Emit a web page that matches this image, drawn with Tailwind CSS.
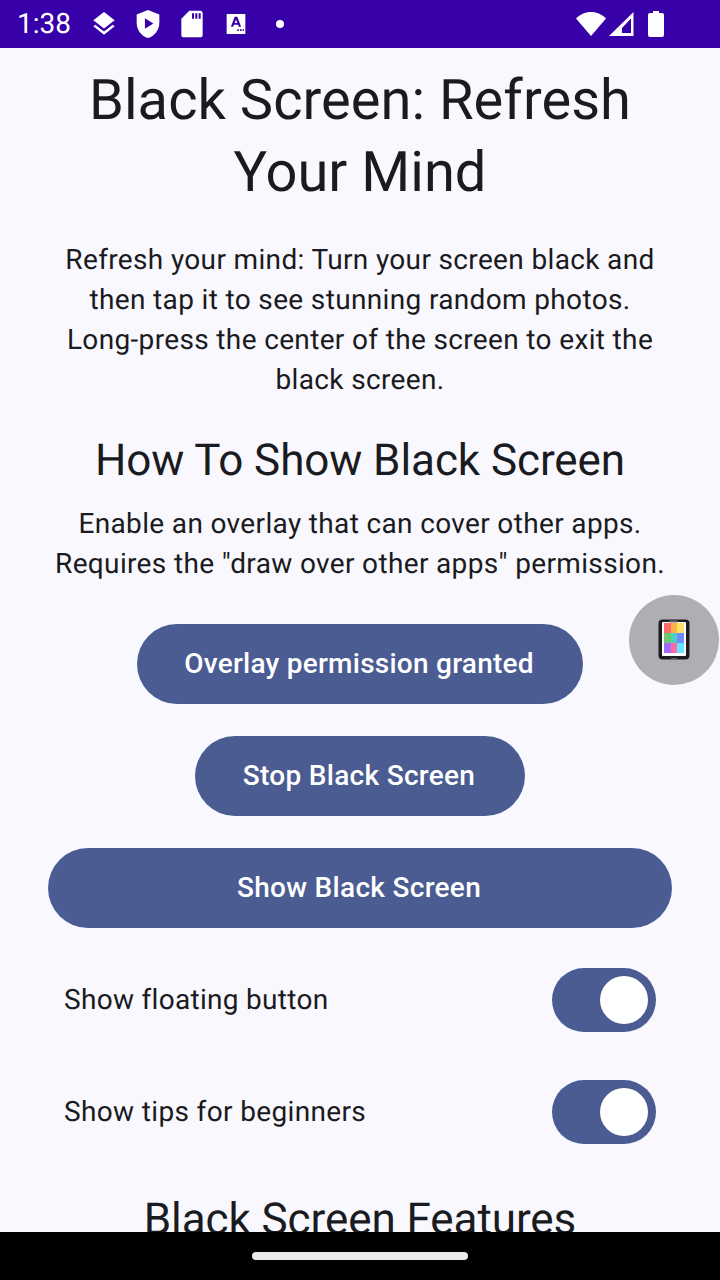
<!DOCTYPE html>
<html lang="en">
<head>
  <meta charset="UTF-8" />
  <meta name="viewport" content="width=device-width, initial-scale=1.0" />
  <title>Black Screen</title>
  <script src="https://cdn.jsdelivr.net/npm/@tailwindcss/browser@4"></script>
</head>
<body class="relative w-[720px] h-[1280px] overflow-hidden flex flex-col bg-[#f9f8ff] text-[#1a1b20] font-['Roboto',sans-serif] [text-rendering:geometricPrecision]">

  <!-- Status bar -->
  <div class="h-12 shrink-0 bg-[#3700a9] text-white flex items-center justify-between pl-[17px] pr-[55px]">
    <div class="flex items-center">
      <span class="text-[28px] leading-none w-[71px]">1:38</span>
      <div class="flex items-center gap-[12px]">
        <svg class="w-[32px] h-[32px]" viewBox="0 0 24 24" fill="#fff"><path d="M12 3 4 9.200l8 6.200 8-6.200z"/><path d="m12 17.600-6.600-5.100L4 13.700l8 6.300 8-6.300-1.400-1.200z"/></svg>
        <svg class="w-[32px] h-[32px]" viewBox="0 0 24 24" fill="#fff"><path fill-rule="evenodd" d="M12 1.500 3.500 4.800v6.400c0 5.200 3.600 9.900 8.500 11.300 4.900-1.400 8.500-6.100 8.500-11.300V4.800zM9.700 7.600v8l6.300-4z"/></svg>
        <svg class="w-[32px] h-[32px]" viewBox="0 0 24 24" fill="#fff"><path fill-rule="evenodd" d="M10 2h8a2 2 0 0 1 2 2v16a2 2 0 0 1-2 2H6a2 2 0 0 1-2-2V8zM12 4v4h1.500V4zm2.500 0v4H16V4zM17 4v4h1.500V4z"/></svg>
        <svg class="w-[32px] h-[32px]" viewBox="0 0 24 24" fill="#fff"><path fill-rule="evenodd" d="M5 4.500h14v15H5zM11 6.500 8.200 14h1.700l.5-1.500h3.200l.5 1.500h1.700L13 6.500zM12 8.700l1 2.500h-2zM13 16h1.200v1.300H13zM15 16h1.200v1.300H15zM17 16h1v1.300h-1z"/></svg>
        <span class="w-[8px] h-[8px] rounded-full bg-white ml-[12px]"></span>
      </div>
    </div>
    <div class="flex items-center">
      <svg class="w-[32px] h-[32px]" viewBox="0 0 32 32" fill="#fff"><path d="M16 28 1 10.500C5 6.500 10 4 16 4s11 2.500 15 6.500z"/></svg>
      <svg class="w-[28px] h-[28px] ml-[1px]" viewBox="0 0 28 28" fill="#fff"><path fill-rule="evenodd" d="M25.500 2v24H1zM23 8.500 14 18v5h9z"/></svg>
      <svg class="w-[18px] h-[28px] ml-[11px]" viewBox="0 0 18 28" fill="#fff"><path d="M6 1h6v2h3a2 2 0 0 1 2 2v20a2 2 0 0 1-2 2H3a2 2 0 0 1-2-2V5a2 2 0 0 1 2-2h3z"/></svg>
    </div>
  </div>

  <!-- Content -->
  <main class="flex-1 min-h-0 overflow-hidden flex flex-col items-center pt-4">
    <h1 class="shrink-0 w-[600px] text-center text-[56px] leading-[72px] tracking-[0.05px]">Black Screen: Refresh Your Mind</h1>
    <p class="shrink-0 mt-8 w-[600px] text-center text-[28px] leading-[40px] tracking-[0.35px]">Refresh your mind: Turn your screen black and then tap it to see stunning random photos. Long-press the center of the screen to exit the black screen.</p>
    <h2 class="shrink-0 mt-8 text-center text-[44px] leading-[56px] tracking-[-0.08px]">How To Show Black Screen</h2>
    <p class="shrink-0 mt-4 w-[640px] text-center text-[28px] leading-[40px] tracking-[0.35px]">Enable an overlay that can cover other apps. Requires the "draw over other apps" permission.</p>

    <button class="shrink-0 mt-10 h-20 w-[446px] pr-[2px] rounded-full bg-[#4b5c92] text-white text-[28px] font-medium tracking-[0.25px]">Overlay permission granted</button>
    <button class="shrink-0 mt-8 h-20 w-[330px] pr-[2px] rounded-full bg-[#4b5c92] text-white text-[28px] font-medium tracking-[0.3px]">Stop Black Screen</button>
    <button class="shrink-0 mt-8 h-20 w-[624px] pr-[2px] rounded-full bg-[#4b5c92] text-white text-[28px] font-medium tracking-[0.3px]">Show Black Screen</button>

    <div class="shrink-0 mt-10 w-full px-16 flex items-center justify-between">
      <span class="text-[28px] tracking-[0.3px]">Show floating button</span>
      <div class="w-[104px] h-[64px] rounded-full bg-[#4b5c92] flex items-center justify-end pr-2">
        <span class="w-12 h-12 rounded-full bg-white"></span>
      </div>
    </div>
    <div class="shrink-0 mt-12 w-full px-16 flex items-center justify-between">
      <span class="text-[28px] tracking-[0.35px]">Show tips for beginners</span>
      <div class="w-[104px] h-[64px] rounded-full bg-[#4b5c92] flex items-center justify-end pr-2">
        <span class="w-12 h-12 rounded-full bg-white"></span>
      </div>
    </div>

    <h2 class="shrink-0 mt-[47px] text-center text-[44px] leading-[56px] tracking-[-0.08px]">Black Screen Features</h2>
  </main>

  <!-- Nav bar -->
  <div class="h-12 shrink-0 bg-black flex justify-center pt-[20px]">
    <span class="w-[216px] h-2 rounded-full bg-[#ececec]"></span>
  </div>

  <!-- Floating button -->
  <div class="absolute left-[629px] top-[595px] w-[90px] h-[90px] rounded-full bg-[#b0aeb2] flex items-center justify-center">
    <svg class="w-[32px] h-[42px]" viewBox="0 0 32 42">
      <rect x="0.500" y="0.500" width="31" height="40" rx="4" fill="#1c1c1e"/>
      <rect x="4" y="3" width="24" height="34" rx="1" fill="#fff"/>
      <rect x="6" y="4" width="7" height="10" fill="#ff6b6b"/>
      <rect x="13" y="4" width="6" height="10" fill="#ffb347"/>
      <rect x="19" y="4" width="7" height="10" fill="#ffe066"/>
      <rect x="6" y="14" width="7" height="10" fill="#6cc86c"/>
      <rect x="13" y="14" width="6" height="10" fill="#4ecdc4"/>
      <rect x="19" y="14" width="7" height="10" fill="#6c8cff"/>
      <rect x="6" y="24" width="7" height="10" fill="#a06cff"/>
      <rect x="13" y="24" width="6" height="10" fill="#ff6ba6"/>
      <rect x="19" y="24" width="7" height="10" fill="#66e6ff"/>
      <rect x="11" y="1.500" width="9" height="2" rx="1" fill="#666"/>
      <rect x="13" y="39" width="6" height="1.500" rx="0.750" fill="#666"/>
    </svg>
  </div>

</body>
</html>
